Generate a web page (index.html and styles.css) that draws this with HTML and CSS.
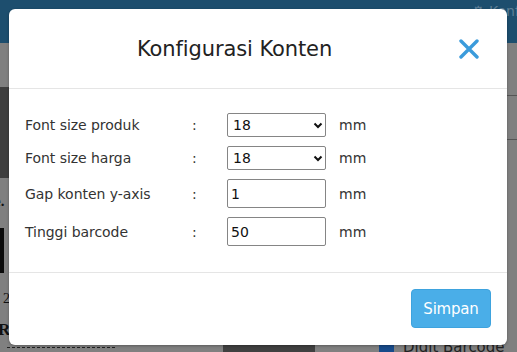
FILE: index.html
```html
<!DOCTYPE html>
<html lang="id">
<head>
<meta charset="utf-8">
<title>Konfigurasi Konten</title>
<link rel="stylesheet" href="styles.css">
</head>
<body>
<div class="page">
  <div class="navbar"><span class="nav-link">⚙ Konfigurasi</span></div>
  <div class="content">
    <div class="dark-left"></div>
    <div class="left-e">e.</div>
    <div class="left-bar"></div>
    <div class="left-2">2</div>
    <div class="left-r">R</div>
    <div class="dash"></div>
    <div class="dark-bottom"></div>
    <div class="digit"><span class="check"></span>Digit Barcode</div>
    <div class="rline r1"></div>
    <div class="rline r2"></div>
  </div>
</div>

<div class="overlay">
  <div class="modal">
    <div class="modal-header">
      <h4 class="modal-title">Konfigurasi Konten</h4>
      <button class="close" type="button" aria-label="Tutup">
        <svg width="20" height="20" viewBox="0 0 20 20"><path d="M2 2 L18 18 M18 2 L2 18" stroke="#3b9bdb" stroke-width="3.4" stroke-linecap="round"/></svg>
      </button>
    </div>
    <div class="modal-body">
      <div class="form-row">
        <label class="lbl">Font size produk</label><span class="colon">:</span>
        <div class="select-wrap">
          <select class="ctl sel"><option>18</option></select>
          <svg class="chev" width="10" height="7" viewBox="0 0 10 7"><path d="M1.5 1.5 L5 5 L8.5 1.5" fill="none" stroke="#111" stroke-width="2"/></svg>
        </div>
        <span class="unit">mm</span>
      </div>
      <div class="form-row">
        <label class="lbl">Font size harga</label><span class="colon">:</span>
        <div class="select-wrap">
          <select class="ctl sel"><option>18</option></select>
          <svg class="chev" width="10" height="7" viewBox="0 0 10 7"><path d="M1.5 1.5 L5 5 L8.5 1.5" fill="none" stroke="#111" stroke-width="2"/></svg>
        </div>
        <span class="unit">mm</span>
      </div>
      <div class="form-row">
        <label class="lbl">Gap konten y-axis</label><span class="colon">:</span>
        <input class="ctl inp" type="text" value="1">
        <span class="unit">mm</span>
      </div>
      <div class="form-row">
        <label class="lbl">Tinggi barcode</label><span class="colon">:</span>
        <input class="ctl inp" type="text" value="50">
        <span class="unit">mm</span>
      </div>
    </div>
    <div class="modal-footer">
      <button class="btn" type="button">Simpan</button>
    </div>
  </div>
</div>
</body>
</html>
```

FILE: styles.css
```css
html, body {
  margin: 0;
  padding: 0;
  width: 517px;
  height: 352px;
  overflow: hidden;
  font-family: "DejaVu Sans", Tahoma, sans-serif;
}
.page {
  width: 517px;
  height: 352px;
  background: #808080;
  display: flex;
  flex-direction: column;
  position: relative;
  overflow: hidden;
}
.navbar {
  height: 43px;
  background: #1d4e6e;
  display: flex;
  justify-content: flex-end;
  align-items: flex-start;
  overflow: hidden;
}
.nav-link {
  color: #5d7f96;
  font-size: 14px;
  padding-top: 3px;
  margin-right: -50px;
  white-space: nowrap;
}
.content {
  flex: 1;
  position: relative;
}
.dark-left { position: absolute; left: 0; top: 44px; width: 9px; height: 91px; background: #3e3e3e; }
.left-e { position: absolute; left: -6px; top: 150px; font: bold 15px "Liberation Serif", serif; color: #111; }
.left-bar { position: absolute; left: 0; top: 185px; width: 4px; height: 45px; background: #0a0a0a; }
.left-2 { position: absolute; left: 3px; top: 248px; font: 14px "Liberation Serif", serif; color: #111; }
.left-r { position: absolute; left: -2px; top: 277px; font: bold 17px "Liberation Serif", serif; color: #111; }
.dash { position: absolute; left: 7px; top: 304px; width: 108px; border-top: 1px dashed #222; }
.dark-bottom { position: absolute; left: 223px; top: 302px; width: 92px; height: 10px; background: #404040; }
.digit { position: absolute; left: 379px; top: 295px; font-size: 15px; color: #222; display: flex; gap: 9px; align-items: center; }
.check { width: 15px; height: 15px; background: #174a8a; border-radius: 2px; }
.rline { position: absolute; left: 507px; width: 10px; border-top: 1px solid #555; }
.r1 { top: 52px; }
.r2 { top: 96px; }

.overlay {
  position: absolute;
  inset: 0;
  padding: 9px;
}
.modal {
  width: 498px;
  height: 336px;
  background: #fff;
  border-radius: 6px;
  box-shadow: 0 1px 3px rgba(0,0,0,0.3);
  display: flex;
  flex-direction: column;
  color: #333;
}
.modal-header {
  height: 79px;
  border-bottom: 1px solid #e5e5e5;
  display: flex;
  align-items: center;
  padding: 0 15px;
}
.modal-title {
  flex: 1;
  margin: 0;
  text-align: center;
  font-weight: normal;
  font-size: 21px;
  color: #222;
  letter-spacing: -0.1px;
}
.close {
  width: 47px;
  height: 40px;
  border: 0;
  padding: 0;
  background: transparent;
  display: flex;
  align-items: center;
  justify-content: center;
}
.modal-body {
  height: 183px;
  box-sizing: border-box;
  padding: 24px 16px 0;
  display: flex;
  flex-direction: column;
  gap: 9px;
}
.form-row {
  display: flex;
  align-items: center;
  font-size: 14px;
}
.lbl {
  width: 167px;
  color: #333;
  letter-spacing: -0.05px;
}
.colon { width: 35px; }
.select-wrap { position: relative; display: flex; }
.ctl {
  box-sizing: border-box;
  width: 99px;
  font-family: inherit;
  font-size: 14px;
  color: #111;
  border: 1px solid #858585;
  border-radius: 2px;
  background: #fff;
  margin: 0;
}
.sel {
  height: 24px;
  appearance: none;
  -webkit-appearance: none;
  padding: 0 0 0 5px;
}
.chev { position: absolute; right: 3px; top: 9px; pointer-events: none; }
.inp {
  height: 29px;
  padding: 0 0 0 3px;
}
.unit {
  margin-left: 13px;
  color: #333;
}
.modal-footer {
  flex: 1;
  border-top: 1px solid #e5e5e5;
  display: flex;
  justify-content: flex-end;
  align-items: flex-start;
  padding: 16px 16px 0 0;
}
.btn {
  width: 80px;
  height: 39px;
  background: #4aaee8;
  border: 1px solid #3ea3de;
  border-radius: 4px;
  color: #fff;
  font-family: inherit;
  font-size: 15px;
  letter-spacing: -0.2px;
}
```
